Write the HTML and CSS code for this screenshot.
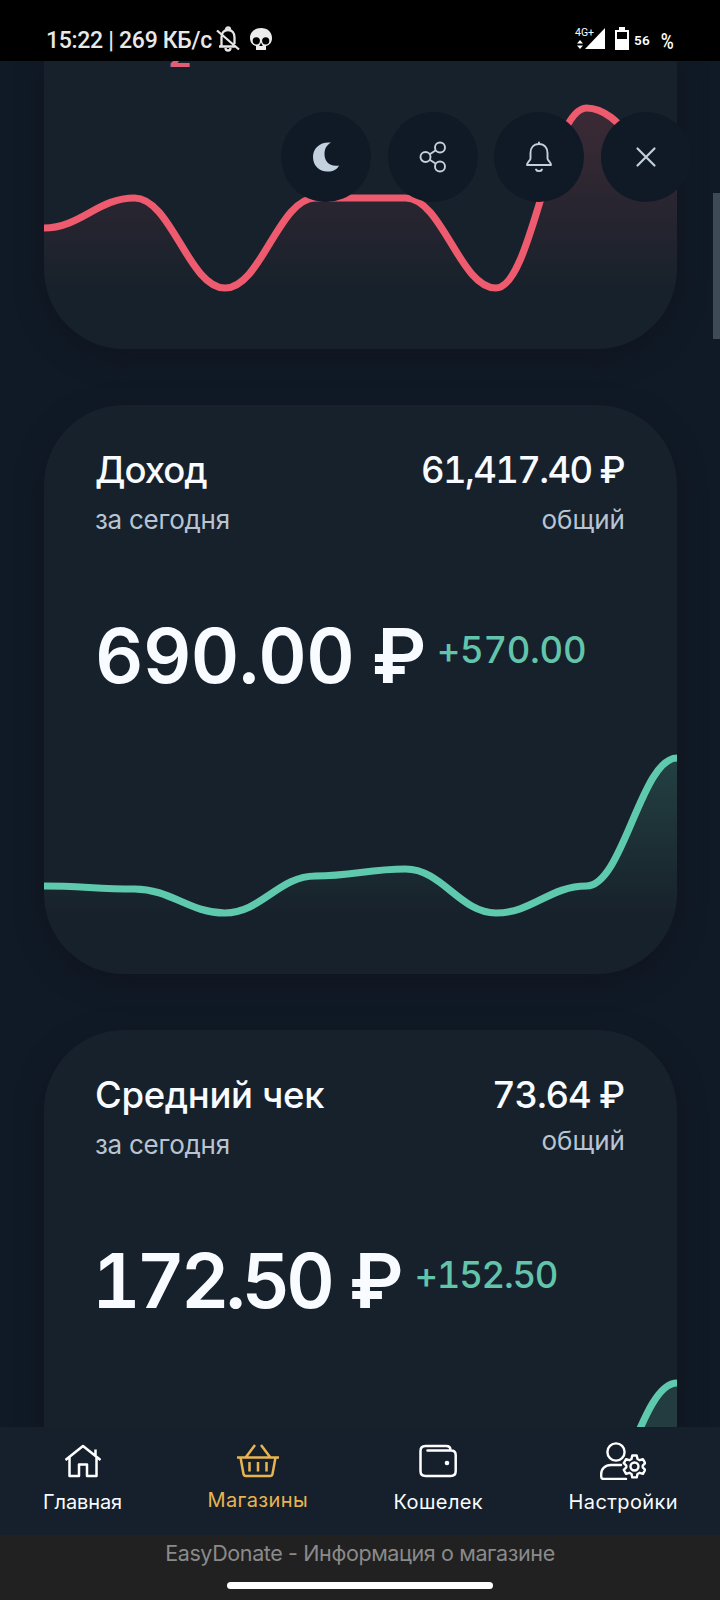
FILE: index.html
```html
<!DOCTYPE html>
<html lang="ru">
<head>
<meta charset="utf-8">
<title>EasyDonate</title>
<link rel="stylesheet" href="styles.css">
</head>
<body>
<div class="screen">
  <header class="status">
    <span class="status-text">15:22 | 269 КБ/с</span>
    <svg class="mute" width="24" height="26" viewBox="0 0 24 26" fill="none" stroke="#e6e6e6" stroke-width="2.300"><path d="M3 20.500H20M5.500 20V11.500C5.500 7 8 4 12 4S18.500 7 18.500 11.500V18M1 4.500L23 23.500"/><path d="M9.500 22a2.500 2.500 0 0 0 5 0M10 3.500a2 2 0 0 1 4 0" /></svg>
    <svg class="skull" width="24" height="24" viewBox="0 0 24 24"><path fill="#ececec" d="M12 1C5.500 1 1 5 1 11c0 4 2 7 6 8v4h10V19C21 18 23 15 23 11 23 5 18.500 1 12 1Z"/><circle cx="7.300" cy="13.800" r="3.600" fill="#000"/><circle cx="16.700" cy="13.800" r="3.600" fill="#000"/><path d="M12 15.500l-1.800 3.500h3.600z" fill="#000"/></svg>
    <span class="status-right">
      <svg class="signal" width="30" height="24" viewBox="0 0 30 24"><path d="M30 1V22H10Z" fill="#fff"/><path d="M5 13l3 3.500H2zM5 22l3-3.500H2z" fill="#fff"/><text class="net" x="0" y="9">4G+</text></svg>
      <svg class="battery" width="14" height="23" viewBox="0 0 14 23"><path d="M4 0h6v3h4v20H0V3h4z" fill="#fff"/><path d="M2 5h10v7H2z" fill="#000"/></svg>
      <span class="level">56</span><span class="percent">%</span>
    </span>
  </header>

  <main class="content">
    <section class="card card-first">
      <div class="clipped"><span>2</span></div>
      <svg class="chart" width="633" height="282" viewBox="44 67 633 282">
        <defs><linearGradient id="r" gradientUnits="userSpaceOnUse" x1="0" y1="108" x2="0" y2="290"><stop stop-color="#ff5b70" stop-opacity=".16"/><stop offset="1" stop-color="#ff5b70" stop-opacity="0"/></linearGradient></defs>
        <path fill="url(#r)" d="M44 228C80 228 98 198 134.500 198S189 288 225 288S279 198 315.500 198H405.500C442 198 460 288 496 288S550 108 586.500 108S641 168 677 168V349H44Z"/>
        <path class="line red" d="M44 228C80 228 98 198 134.500 198S189 288 225 288S279 198 315.500 198H405.500C442 198 460 288 496 288S550 108 586.500 108S641 168 677 168"/>
      </svg>
    </section>

    <section class="card">
      <div class="head">
        <div><h2 class="t-income">Доход</h2><p class="t-today">за сегодня</p></div>
        <div class="total"><h2 class="t-total">61,417.40 ₽</h2><p>общий</p></div>
      </div>
      <div class="value income"><strong>690.00 ₽</strong><em>+570.00</em></div>
      <svg class="chart" width="633" height="234" viewBox="44 740 633 234">
        <defs><linearGradient id="g" gradientUnits="userSpaceOnUse" x1="0" y1="758" x2="0" y2="915"><stop stop-color="#5bd0a8" stop-opacity=".18"/><stop offset="1" stop-color="#5bd0a8" stop-opacity="0"/></linearGradient></defs>
        <path fill="url(#g)" d="M44 886C80 886 98 889 134.500 889S189 913 225 913S279 876 315.500 876S369 869 405.500 869S460 913 496 913S550 886 586.500 886S641 758 677 758V974H44Z"/>
        <path class="line green" d="M44 886C80 886 98 889 134.500 889S189 913 225 913S279 876 315.500 876S369 869 405.500 869S460 913 496 913S550 886 586.500 886S641 758 677 758"/>
      </svg>
    </section>

    <section class="card">
      <div class="head">
        <div><h2 class="t-avg">Средний чек</h2><p class="t-today">за сегодня</p></div>
        <div class="total short"><h2 class="t-avg-total">73.64 ₽</h2><p>общий</p></div>
      </div>
      <div class="value average"><strong>172.50 ₽</strong><em>+152.50</em></div>
      <svg class="chart" width="633" height="234" viewBox="44 1365 633 234">
        <path fill="#5bd0a8" fill-opacity=".16" d="M586.500 1511C623 1511 641 1383 677 1383V1599H586Z"/>
        <path class="line green" d="M586.500 1511C623 1511 641 1383 677 1383"/>
      </svg>
    </section>

    <div class="actions">
      <button><svg width="30" height="32" viewBox="0 0 30 32"><path fill="#c3d0de" d="M20 1.500C9 .5 2 7 2 16s7 15 15 14.500c5 0 9-2 11-6C18 26 13.500 20 13.500 13c0-5 2-9 6.500-11.500Z"/></svg></button>
      <button><svg width="30" height="32" viewBox="0 0 30 32" fill="none" stroke="#c3d0de" stroke-width="1.900"><circle cx="7.500" cy="16" r="5"/><circle cx="22" cy="6.500" r="5"/><circle cx="22" cy="25.500" r="5"/><path d="M11.800 13.300l6-4M11.800 18.700l6 4"/></svg></button>
      <button><svg width="30" height="32" viewBox="0 0 30 32" fill="none" stroke="#c3d0de" stroke-width="1.900" stroke-linecap="round" stroke-linejoin="round"><path d="M15 1.500V3M15 3c-5.500 0-8.500 4-8.500 9v5.500c0 2-3.500 3.500-3.500 6.500h24c0-3-3.500-4.500-3.500-6.500V12c0-5-3-9-8.500-9ZM12 28.500c1 2.200 5 2.200 6 0"/></svg></button>
      <button><svg width="30" height="32" viewBox="0 0 30 32" fill="none" stroke="#c3d0de" stroke-width="2.200" stroke-linecap="round"><path d="M6.500 7.500l17 17M23.500 7.500l-17 17"/></svg></button>
    </div>
    <div class="scrollbar"></div>
  </main>

  <nav class="nav">
    <a class="n1"><svg width="36" height="34" viewBox="0 0 36 34" fill="none" stroke="#fff" stroke-width="2.500" stroke-linejoin="round"><path d="M.5 16L18 2l17.500 14M4.500 13.500V32H14V20.500h8V32h9.500V13.500M30.500 11.500V5.500"/></svg><span>Главная</span></a>
    <a class="n2"><svg width="42" height="34" viewBox="0 0 42 34" fill="none" stroke="#e9b450" stroke-width="2.500"><path d="M0 13.500H42M3.500 13.500L6.500 30q.4 2 2.500 2H33q2.100 0 2.500-2L38.500 13.500M9 13L18 1M33 13L24 1M12.500 18V27.500M21 18V27.500M29.500 18V27.500"/></svg><span>Магазины</span></a>
    <a class="n3"><svg width="38" height="34" viewBox="0 0 38 34" fill="none" stroke="#fff" stroke-width="2.500" stroke-linecap="round"><path d="M8.500 6.500H32q4.700 0 4.700 4.500V27q0 5-5 5H6.500q-5 0-5-5V7q0-5 5-5H27q4.500 0 4.500 4"/><circle cx="28" cy="19" r="2.300" fill="#fff" stroke="none"/></svg><span>Кошелек</span></a>
    <a class="n4"><svg width="46" height="38" viewBox="0 0 46 38" fill="none" stroke="#fff" stroke-width="2.400" stroke-linecap="round" stroke-linejoin="round"><circle cx="16" cy="10" r="8.600"/><path d="M21 23H11C5 23 1.200 27 1.200 32v2.500Q1.200 37 3.700 37H26"/><circle cx="34.500" cy="24.500" r="4"/><path d="M32.300 13.500h4.400l.8 3.500 2.200 1.200 3.200-1 2.300 4-2.500 2.500v1.600l2.500 2.500-2.300 4-3.200-1-2.200 1.200-.8 3.400h-4.400l-.8-3.400-2.200-1.200-3.200 1-2.300-4 2.500-2.500v-1.600l-2.500-2.500 2.300-4 3.200 1 2.200-1.200Z"/></svg><span>Настройки</span></a>
  </nav>
  <footer class="footer"><p>EasyDonate - Информация о магазине</p><div class="pill"></div></footer>
</div>
</body>
</html>
```
FILE: styles.css
```css
* { box-sizing: border-box; margin: 0; padding: 0; }
body { background: #101a26; font-family: Inter, "Noto Sans", sans-serif; color: #f8fbff; }
.screen { width: 720px; height: 1600px; display: flex; flex-direction: column; overflow: hidden; }

.status { height: 61px; flex: none; background: #000; display: flex; align-items: flex-start; padding-left: 46px; font-family: Roboto, sans-serif; color: #e8e8e8; }
.status-text { font-size: 23px; font-weight: 500; line-height: 28px; margin-top: 27px; width: 168px; white-space: nowrap; letter-spacing: -.3px; }
.mute { margin-top: 26px; margin-left: 2px; }
.skull { margin-top: 27px; margin-left: 9px; }
.status-right { display: flex; margin: 27px 43px 0 auto; color: #fff; }
.signal { overflow: visible; }
.battery { margin-left: 10px; }
.net { font: 10.500px Roboto, sans-serif; fill: #fff; }
.level { font-size: 13.500px; font-weight: 600; line-height: 27px; margin-left: 5px; letter-spacing: .3px; }
.percent { font-size: 22px; font-weight: 500; line-height: 29px; margin-left: 9px; width: 18px; transform: scaleX(.8); }

.content { height: 1366px; flex: none; overflow: hidden; position: relative; padding: 0 43px 0 44px; display: flex; flex-direction: column; gap: 56px; }
.card { flex: none; height: 569px; background: #17212b; border-radius: 80px; overflow: hidden; box-shadow: 0 8px 22px 6px rgba(16, 20, 30, .6); display: flex; flex-direction: column; }
.card-first { height: 288px; border-radius: 0 0 80px 80px; }
.clipped { height: 6px; overflow: hidden; display: flex; align-items: flex-end; padding-left: 124px; color: #e45d76; font-size: 38px; font-weight: 600; line-height: 28px; flex: none; }
.chart { display: block; flex: none; margin-top: auto; }
.line { fill: none; stroke-width: 7.200px; }
.red { stroke: #ee5a6e; }
.green { stroke: #5fc9ae; }

.head { display: flex; justify-content: space-between; padding: 45px 52px 0; height: 135px; flex: none; white-space: nowrap; }
h2 { font-size: 36.500px; font-weight: 550; line-height: 40px; }
.head p { font-size: 26px; line-height: 32px; margin-top: 14px; color: #b9c4d3; }
.t-income { letter-spacing: -1px; margin-left: -1px; }
.t-avg { letter-spacing: -.350px; margin-left: -1px; }
.t-total { letter-spacing: -1.650px; }
.t-avg-total { letter-spacing: -1.200px; }
.head .t-today { letter-spacing: -.250px; margin-left: -1px; }
.total { display: flex; flex-direction: column; align-items: flex-end; }
.total h2 { margin-right: 1px; }
.total.short p { margin-top: 10px; }
.value { display: flex; padding: 70px 52px 0; flex: none; white-space: nowrap; }
.value strong { font-size: 75px; font-weight: 600; line-height: 91px; }
.value em { font-size: 36.500px; font-weight: 550; font-style: normal; line-height: 40px; margin-top: 20px; margin-left: 11px; color: #63c4ac; }
.income strong { letter-spacing: -.600px; word-spacing: -2px; margin-left: -1px; }
.income em { letter-spacing: -.300px; }
.average strong { letter-spacing: -4px; margin-left: -4px; word-spacing: 2px; }
.average em { letter-spacing: -1.300px; margin-left: 15px; }
h2, .value { font-feature-settings: "tnum"; }

.actions { position: absolute; left: 281px; top: 51px; display: flex; gap: 16.600px; }
.actions button { width: 90px; height: 90px; border: 0; border-radius: 50%; background: #101a26; display: flex; align-items: center; justify-content: center; }
.scrollbar { position: absolute; right: 0; top: 132px; width: 7px; height: 146px; background: #3e4a56; }

.nav { height: 108px; flex: none; background: #16202c; display: flex; justify-content: space-between; padding: 15px 42px 0 43px; }
.nav a { display: flex; flex-direction: column; align-items: center; font-size: 20px; line-height: 24px; white-space: nowrap; }
.nav svg { height: 38px; }
.nav span { margin-top: 10px; }
.n1 { letter-spacing: -.1px; }
.n3 { letter-spacing: .4px; }
.n4 { letter-spacing: .4px; }
.nav .n2 { color: #e9b450; letter-spacing: .4px; }
.nav .n2 span { margin-top: 8px; }
.footer { flex: 1; background: #212121; display: flex; flex-direction: column; align-items: center; color: #8a8a8a; font-size: 21.500px; letter-spacing: -.380px; }
.footer p { line-height: 28px; margin-top: 4px; white-space: nowrap; }
.pill { width: 266px; height: 7px; border-radius: 4px; background: #fff; margin-top: 15px; }
```
